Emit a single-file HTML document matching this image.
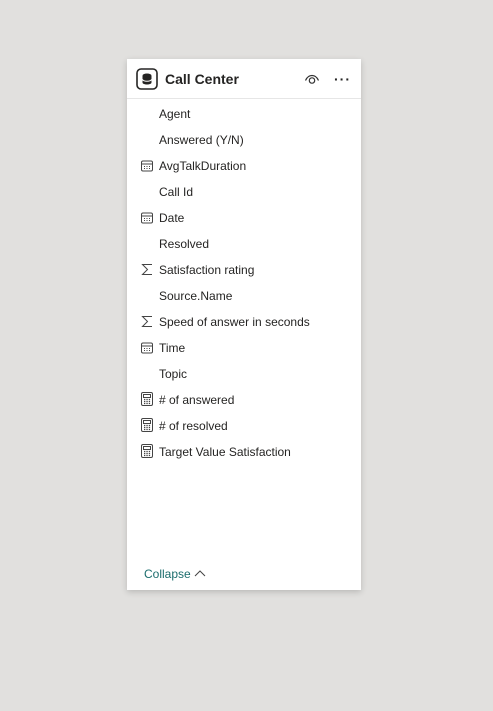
<!DOCTYPE html>
<html><head><meta charset="utf-8"><style>
*{margin:0;padding:0;box-sizing:border-box}
body{width:493px;height:711px;background:#e1e0de;font-family:"Liberation Sans",sans-serif;position:relative;overflow:hidden}
.card{position:absolute;left:127px;top:59px;width:234px;height:531px;background:#fff;box-shadow:0 2px 6px rgba(0,0,0,.18)}
.hdr{height:40px;border-bottom:1px solid #e6e6e6;position:relative}
.title{position:absolute;left:38px;top:12px;font-size:14px;font-weight:bold;color:#252423}
.row{position:absolute;left:32px;font-size:12px;color:#252423;line-height:14px}
.ic{position:absolute;left:14px}
.col{position:absolute;left:17px;top:508px;font-size:12px;color:#1b6d6d}
</style></head><body>
<div class="card">
<div class="hdr">
<svg style="position:absolute;left:9px;top:9px" width="22" height="22" viewBox="0 0 22 22"><rect x="1" y="1" width="20" height="20" rx="4" fill="none" stroke="#252423" stroke-width="1.6"/><ellipse cx="11" cy="7.5" rx="4.5" ry="2" fill="#252423"/><path d="M6.5 8v6.5c0 1.2 2 2 4.5 2s4.5-.8 4.5-2V8" fill="#252423"/><path d="M6.5 11.3c0 1.1 2 2 4.5 2s4.5-.9 4.5-2" fill="none" stroke="#fff" stroke-width="1"/></svg>
<div class="title">Call Center</div>
<svg style="position:absolute;left:177px;top:13px" width="16" height="14" viewBox="0 0 16 14"><path d="M1.5 8.5C3 5 5.5 3.5 8 3.5s5 1.5 6.5 5" fill="none" stroke="#333" stroke-width="1.2"/><circle cx="8" cy="8.5" r="2.7" fill="none" stroke="#333" stroke-width="1.2"/></svg>
<div style="position:absolute;left:207px;top:12px;font-size:14px;font-weight:bold;color:#252423;letter-spacing:1px">···</div>
</div>
<div class="row" style="top:48px">Agent</div>
<div class="row" style="top:74px">Answered (Y/N)</div>
<div class="row" style="top:100px">AvgTalkDuration</div>
<div class="row" style="top:126px">Call Id</div>
<div class="row" style="top:152px">Date</div>
<div class="row" style="top:178px">Resolved</div>
<div class="row" style="top:204px">Satisfaction rating</div>
<div class="row" style="top:230px">Source.Name</div>
<div class="row" style="top:256px">Speed of answer in seconds</div>
<div class="row" style="top:282px">Time</div>
<div class="row" style="top:308px">Topic</div>
<div class="row" style="top:334px"># of answered</div>
<div class="row" style="top:360px"># of resolved</div>
<div class="row" style="top:386px">Target Value Satisfaction</div>
<!-- table icons -->
<svg class="ic" style="top:101px" width="12" height="12" viewBox="0 0 12 12"><rect x=".5" y="1" width="11" height="10" rx="1.5" fill="none" stroke="#444"/><line x1=".5" y1="4" x2="11.5" y2="4" stroke="#444"/><path d="M3 6.5h1M5.5 6.5h1M8 6.5h1M3 8.5h1M5.5 8.5h1M8 8.5h1" stroke="#444"/></svg>
<svg class="ic" style="top:153px" width="12" height="12" viewBox="0 0 12 12"><rect x=".5" y="1" width="11" height="10" rx="1.5" fill="none" stroke="#444"/><line x1=".5" y1="4" x2="11.5" y2="4" stroke="#444"/><path d="M3 6.5h1M5.5 6.5h1M8 6.5h1M3 8.5h1M5.5 8.5h1M8 8.5h1" stroke="#444"/></svg>
<svg class="ic" style="top:283px" width="12" height="12" viewBox="0 0 12 12"><rect x=".5" y="1" width="11" height="10" rx="1.5" fill="none" stroke="#444"/><line x1=".5" y1="4" x2="11.5" y2="4" stroke="#444"/><path d="M3 6.5h1M5.5 6.5h1M8 6.5h1M3 8.5h1M5.5 8.5h1M8 8.5h1" stroke="#444"/></svg>
<svg class="ic" style="top:204px" width="12" height="13" viewBox="0 0 12 13"><path d="M11 1.5H1.5L6.5 6.5L1.5 11.5H11" fill="none" stroke="#444" stroke-width="1"/></svg>
<svg class="ic" style="top:256px" width="12" height="13" viewBox="0 0 12 13"><path d="M11 1.5H1.5L6.5 6.5L1.5 11.5H11" fill="none" stroke="#444" stroke-width="1"/></svg>
<svg class="ic" style="top:333px" width="12" height="14" viewBox="0 0 12 14"><rect x=".5" y=".5" width="11" height="13" rx="1.5" fill="none" stroke="#444"/><rect x="2.5" y="2.5" width="7" height="3" fill="none" stroke="#444"/><path d="M3 7.5h1.3M5.4 7.5h1.3M7.8 7.5h1.3M3 9.5h1.3M5.4 9.5h1.3M7.8 9.5h1.3M3 11.5h1.3M5.4 11.5h1.3M7.8 11.5h1.3" stroke="#444" stroke-width="1.2"/></svg>
<svg class="ic" style="top:359px" width="12" height="14" viewBox="0 0 12 14"><rect x=".5" y=".5" width="11" height="13" rx="1.5" fill="none" stroke="#444"/><rect x="2.5" y="2.5" width="7" height="3" fill="none" stroke="#444"/><path d="M3 7.5h1.3M5.4 7.5h1.3M7.8 7.5h1.3M3 9.5h1.3M5.4 9.5h1.3M7.8 9.5h1.3M3 11.5h1.3M5.4 11.5h1.3M7.8 11.5h1.3" stroke="#444" stroke-width="1.2"/></svg>
<svg class="ic" style="top:385px" width="12" height="14" viewBox="0 0 12 14"><rect x=".5" y=".5" width="11" height="13" rx="1.5" fill="none" stroke="#444"/><rect x="2.5" y="2.5" width="7" height="3" fill="none" stroke="#444"/><path d="M3 7.5h1.3M5.4 7.5h1.3M7.8 7.5h1.3M3 9.5h1.3M5.4 9.5h1.3M7.8 9.5h1.3M3 11.5h1.3M5.4 11.5h1.3M7.8 11.5h1.3" stroke="#444" stroke-width="1.2"/></svg>
<div class="col">Collapse <svg width="12" height="8" viewBox="0 0 12 8" style="vertical-align:1px"><path d="M1 7L6 2L11 7" fill="none" stroke="#444" stroke-width="1"/></svg></div>
</div>
</body></html>
